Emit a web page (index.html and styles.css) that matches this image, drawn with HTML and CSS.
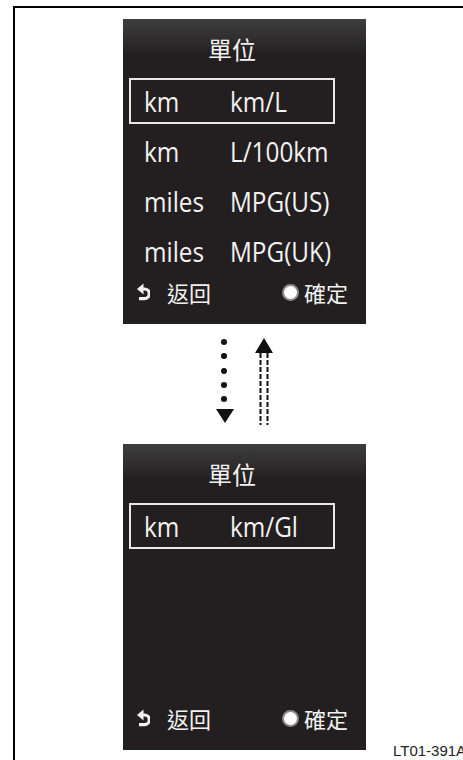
FILE: index.html
```html
<!DOCTYPE html>
<html>
	<head>
		<meta charset="UTF-8">
		<title>單位</title>
		<link rel="stylesheet" href="styles.css">
	</head>
	<body>
		<div class="frame">
			<!-- 畫面1：單位一覽 -->
			<div class="screen">
				<div class="title">單位</div>
				<ul class="units">
					<li class="unit selected"><span class="dist">km</span><span class="fuel">km/L</span></li>
					<li class="unit"><span class="dist">km</span><span class="fuel">L/100km</span></li>
					<li class="unit"><span class="dist">miles</span><span class="fuel">MPG(US)</span></li>
					<li class="unit"><span class="dist">miles</span><span class="fuel">MPG(UK)</span></li>
				</ul>
				<div class="foot">
					<span class="back">
						<svg class="back-icon" width="13" height="18" viewBox="0 0 13 18">
							<path d="M0 6 L6.5 0.5 L6.5 11.5 Z" fill="#f2f2f2"/>
							<path d="M5 6 H7.5 A4.8 4.8 0 0 1 7.5 15.6 H2" fill="none" stroke="#f2f2f2" stroke-width="3.2"/>
						</svg>
						返回
					</span>
					<span class="ok"><i class="dot"></i>確定</span>
				</div>
			</div>

			<!-- 切換箭頭 -->
			<div class="flow">
				<svg width="243" height="120" viewBox="0 0 243 120">
					<circle cx="101" cy="18" r="3" fill="#111"/>
					<circle cx="101" cy="32" r="3" fill="#111"/>
					<circle cx="101" cy="47" r="3" fill="#111"/>
					<circle cx="101" cy="61" r="3" fill="#111"/>
					<circle cx="101" cy="75" r="3" fill="#111"/>
					<path d="M93 85 L111 85 L102 99 Z" fill="#111"/>
					<path d="M141 14 L150 29 L132 29 Z" fill="#111"/>
					<line x1="137.5" y1="29" x2="137.5" y2="101" stroke="#111" stroke-width="2" stroke-dasharray="5 2"/>
					<line x1="144.5" y1="29" x2="144.5" y2="101" stroke="#111" stroke-width="2" stroke-dasharray="5 2"/>
				</svg>
			</div>

			<!-- 畫面2 -->
			<div class="bottom-row">
				<div class="screen screen-2">
					<div class="title">單位</div>
					<ul class="units">
						<li class="unit selected"><span class="dist">km</span><span class="fuel">km/Gl</span></li>
					</ul>
					<div class="foot">
						<span class="back">
							<svg class="back-icon" width="13" height="18" viewBox="0 0 13 18">
								<path d="M0 6 L6.5 0.5 L6.5 11.5 Z" fill="#f2f2f2"/>
								<path d="M5 6 H7.5 A4.8 4.8 0 0 1 7.5 15.6 H2" fill="none" stroke="#f2f2f2" stroke-width="3.2"/>
							</svg>
							返回
						</span>
						<span class="ok"><i class="dot"></i>確定</span>
					</div>
				</div>
				<div class="code">LT01-391A</div>
			</div>
		</div>
	</body>
</html>
```
FILE: styles.css
```css
*{
	margin: 0;
	padding: 0;
}

body{
	background: #fff;
	overflow: hidden;
	font-family: "Liberation Sans", Arial, sans-serif;
}

.frame{
	margin: 6px 0 0 13px;
	border-top: 2px solid #000;
	border-left: 2px solid #000;
	width: 450px;
	height: 754px;
	padding: 11px 0 0 108px;
	box-sizing: border-box;
	overflow: hidden;
}

/* 顯示畫面 */
.screen{
	flex-shrink: 0;
	width: 243px;
	height: 305px;
	background: linear-gradient(#3e3e3e 0, #231f20 36px);
	background-color: #231f20;
	color: #f2f2f2;
	display: flex;
	flex-direction: column;
}
.screen-2{
	height: 306px;
}

.title{
	font-family: "Noto Sans CJK TC", "Noto Sans CJK SC", sans-serif;
	font-size: 24px;
	line-height: 24px;
	padding: 18px 25px 0 0;
	text-align: center;
}

.units{
	list-style: none;
	margin: 17px 0 0 6px;
	width: 206px;
	display: flex;
	flex-direction: column;
	gap: 4px;
}
.unit{
	height: 46px;
	box-sizing: border-box;
	border: 2px solid transparent;
	padding: 2px 0 0 13px;
	display: flex;
	align-items: center;
	overflow: hidden;
	font-family: "Open Sans", "Liberation Sans", sans-serif;
	font-weight: 380;
	font-size: 27px;
	line-height: 40px;
}
.unit.selected{
	border-color: #e8e8e8;
}
/* 字形偏窄 */
.unit span{
	flex-shrink: 0;
	display: inline-block;
	transform: scaleX(0.9);
	transform-origin: left center;
	white-space: nowrap;
}
.dist{
	width: 86px;
}

/* 底部按鈕 */
.foot{
	margin-top: auto;
	padding: 0 18px 20px 14px;
	display: flex;
	justify-content: space-between;
	align-items: center;
	font-family: "Noto Sans CJK TC", "Noto Sans CJK SC", sans-serif;
	font-size: 22px;
	line-height: 24px;
}
.back{
	display: flex;
	align-items: center;
	gap: 17px;
}
.ok{
	display: flex;
	align-items: center;
	gap: 5px;
}
.dot{
	width: 13px;
	height: 13px;
	border-radius: 50%;
	background: #fff;
	border: 2px solid #8a8a8a;
}

.flow{
	height: 120px;
}
.flow svg{
	display: block;
}

.bottom-row{
	display: flex;
	align-items: flex-end;
}
.code{
	margin: 0 0 -8px 27px;
	font-size: 15px;
	line-height: 15px;
	color: #222;
	white-space: nowrap;
}
```
